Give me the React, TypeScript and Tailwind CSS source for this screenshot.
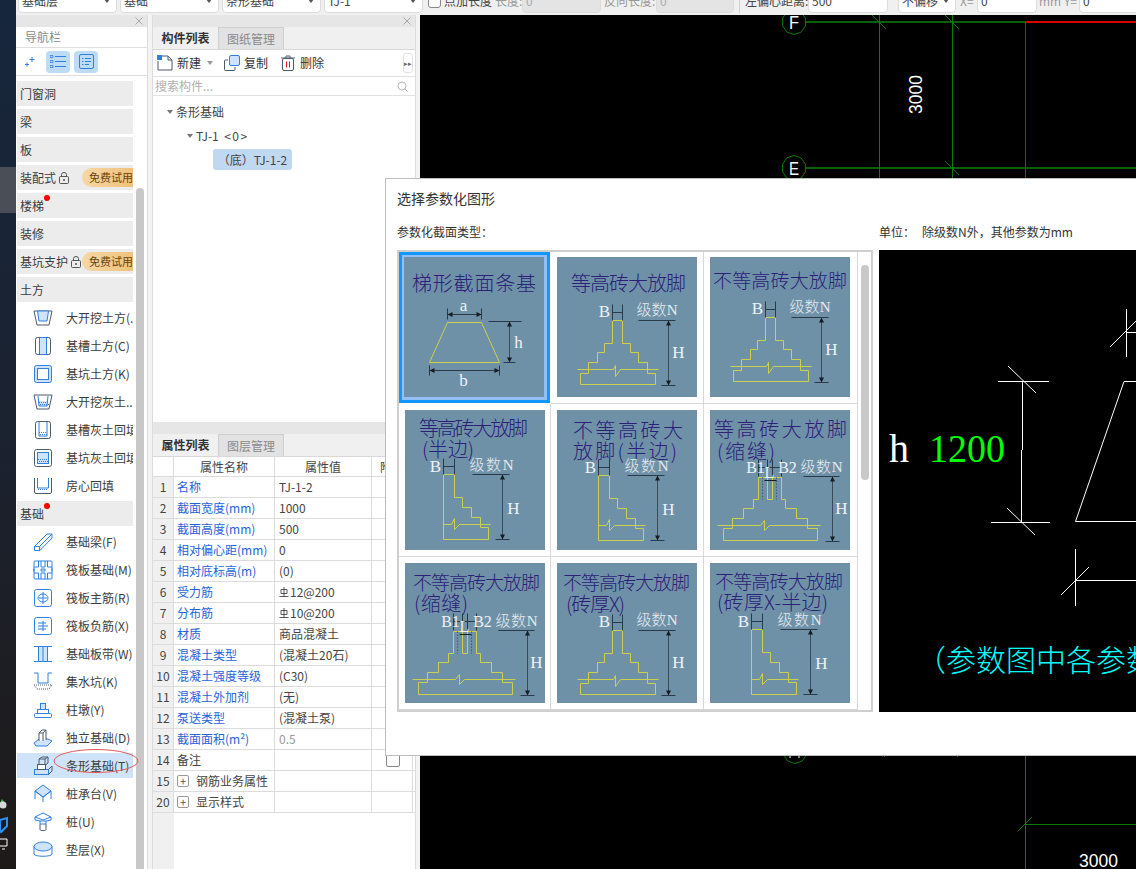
import React from "react";

const Y = "#cdd04c";
const D = "#2b3a48";
const W = "#eef3f6";
const SERIF = "'Liberation Serif','Noto Sans CJK SC',serif";
const SANS = "'Noto Sans CJK SC','Liberation Sans',sans-serif";

function VDim({ x, y1, y2 }: { x: number; y1: number; y2: number }) {
  return (
    <g>
      <line x1={x} y1={y1} x2={x} y2={y2} stroke="#3c4a58" strokeWidth="1" />
      <polygon points={`${x},${y1} ${x - 2.5},${y1 + 5} ${x + 2.5},${y1 + 5}`} fill="#161c22" />
      <polygon points={`${x},${y2} ${x - 2.5},${y2 - 5} ${x + 2.5},${y2 - 5}`} fill="#161c22" />
    </g>
  );
}

function Lab({ x, y, t, size = 17, len }: { x: number; y: number; t: string; size?: number; len?: number }) {
  return (
    <text x={x} y={y} fontFamily={SERIF} fontSize={size} fill={W} textAnchor={len ? "start" : "middle"} dominantBaseline="central" textLength={len} lengthAdjust={len ? "spacingAndGlyphs" : undefined}>
      {t}
    </text>
  );
}

function Nlab({ x, y, len }: { x: number; y: number; len: number }) {
  return (
    <text x={x} y={y} fontFamily={SERIF} fontWeight="300" fontSize="15" fill="#e4ebef" dominantBaseline="central" textLength={len} lengthAdjust="spacing">
      级数N
    </text>
  );
}

function Title({ lines }: { lines: [string, number, number, number][] }) {
  return (
    <g>
      {lines.map(([t, x1, x2, y]) => (
        <text key={t} x={x1} y={y} fontFamily={SANS} fontWeight="300" fontSize={t.length >= 7 && x2 - x1 > 125 ? 19 : 20} fill="#2c2078" dominantBaseline="central" textLength={x2 - x1} lengthAdjust="spacing">
          {t}
        </text>
      ))}
    </g>
  );
}

function Trapezoid() {
  return (
    <g>
      <polygon points="43,65 77,65 95,105 25,105" fill="none" stroke={Y} strokeWidth="1" />
      <path d="M43 51V62M77 51V62M43 57H77" stroke={D} fill="none" />
      <polygon points="43,57 48,54.5 48,59.5" fill="#161c22" />
      <polygon points="77,57 72,54.5 72,59.5" fill="#161c22" />
      <Lab x={59} y={48} t="a" />
      <path d="M84 64H117M99 105H111" stroke={D} fill="none" />
      <VDim x={105} y1={64} y2={105} />
      <Lab x={114} y={85} t="h" />
      <path d="M25 108V118M95 108V118M25 113H95" stroke={D} fill="none" />
      <polygon points="25,113 30,110.5 30,115.5" fill="#161c22" />
      <polygon points="95,113 90,110.5 90,115.5" fill="#161c22" />
      <Lab x={59} y={123} t="b" />
    </g>
  );
}

function Full({ dy = 0 }: { dy?: number }) {
  return (
    <g transform={`translate(0 ${dy})`}>
      <polygon points="55,63 65,63 65,86 73,86 73,95 81,95 81,105 90,105 90,116 98,116 98,127 23,127 23,116 31,116 31,105 40,105 40,95 47,95 47,86 55,86" fill="none" stroke={Y} strokeWidth="1" />
      <path d="M20 112H56L58 108L58 119L63 112H101" fill="none" stroke={Y} strokeWidth="1" />
      <path d="M55 47V63M65 47V63M55 55H65" stroke={D} fill="none" />
      <Lab x={47} y={54} t="B" />
      <Nlab x={79} y={52} len={41} />
      <path d="M81 63H118M104 128H118" stroke={D} fill="none" />
      <VDim x={111} y1={63} y2={128} />
      <Lab x={121} y={95} t="H" />
    </g>
  );
}

function Half({ dx = 0, dy = 0 }: { dx?: number; dy?: number }) {
  return (
    <g transform={`translate(${dx} ${dy})`}>
      <polygon points="38,64 49,64 49,87 57,87 57,97 66,97 66,107 75,107 75,117 83,117 83,129 38,129" fill="none" stroke={Y} strokeWidth="1" />
      <path d="M38 114H46L49 108L49 119L54 114H85" fill="none" stroke={Y} strokeWidth="1" />
      <path d="M38 48V64M49 48V64M38 56H49" stroke={D} fill="none" />
      <Lab x={30} y={56} t="B" />
      <Nlab x={64} y={54} len={44} />
      <path d="M67 64H104M90 129H104" stroke={D} fill="none" />
      <VDim x={97} y1={64} y2={129} />
      <Lab x={108} y={98} t="H" />
    </g>
  );
}

function Gap({ dy = 0 }: { dy?: number }) {
  return (
    <g transform={`translate(0 ${dy})`}>
      <polygon points="48,68 71,68 71,90 75,90 75,99 86,99 86,109 97,109 97,119 107,119 107,131 13,131 13,119 22,119 22,109 33,109 33,99 43,99 43,90 48,90" fill="none" stroke={Y} strokeWidth="1" />
      <path d="M57 68V90H62V68" fill="none" stroke={Y} strokeWidth="1" />
      <path d="M7 116H50L54 111L54 121L59 116H110" fill="none" stroke={Y} strokeWidth="1" />
      <path d="M52 68V90M66 68V90" fill="none" stroke="#4a5a68" strokeDasharray="1.5 1.5" />
      <path d="M48 50V67M57 50V67M62 50V67M71 50V67M48 58H71" stroke={D} fill="none" />
      <Lab x={45} y={58} t="B1" size={16} />
      <Lab x={77} y={58} t="B2" size={16} />
      <Lab x={59} y={63} t="L" size={16} />
      <path d="M54 71H66" stroke="#161c22" />
      <Nlab x={90} y={57} len={42} />
      <path d="M93 67H129M115 132H129" stroke={D} fill="none" />
      <VDim x={122} y1={67} y2={132} />
      <Lab x={131} y={99} t="H" />
    </g>
  );
}

const tiles: { lines: [string, number, number, number][]; art: React.ReactNode }[] = [
  { lines: [["梯形截面条基", 8, 132, 25]], art: <Trapezoid /> },
  { lines: [["等高砖大放脚", 14, 129, 25]], art: <Full /> },
  { lines: [["不等高砖大放脚", 3, 137, 22]], art: <Full dy={-3} /> },
  { lines: [["等高砖大放脚", 14, 123, 17], ["(半边)", 17, 69, 38]], art: <Half /> },
  { lines: [["不等高砖大", 16, 126, 19], ["放脚(半边)", 16, 120, 40]], art: <Half dx={3} dy={1} /> },
  { lines: [["等高砖大放脚", 4, 137, 18], ["(缩缝)", 7, 65, 40]], art: <Gap dy={-1} /> },
  { lines: [["不等高砖大放脚", 8, 135, 18], ["(缩缝)", 9, 63, 39]], art: <Gap /> },
  { lines: [["不等高砖大放脚", 6, 133, 18], ["(砖厚X)", 9, 68, 40]], art: <Full dy={4} /> },
  { lines: [["不等高砖大放脚", 5, 133, 17], ["(砖厚X-半边)", 7, 118, 38]], art: <Half dx={3} dy={2} /> },
];

function Tile({ i }: { i: number }) {
  const t = tiles[i];
  return (
    <svg width="140" height="140" viewBox="0 0 140 140" className="block bg-[#6f91a8]">
      <Title lines={t.lines} />
      <g transform="translate(0.5 0.5)">{t.art}</g>
    </svg>
  );
}

const B = "#2f80e4";
const G = "#4d5b6e";
const L = "#cfe3fa";

function Dots({ x, y, w, h }: { x: number; y: number; w: number; h: number }) {
  const out = [];
  for (let r = 0; r < h; r += 2) for (let c = 0; c < w; c += 2) out.push(<rect key={`${r}-${c}`} x={x + c + (r % 4 ? 1 : 0)} y={y + r} width="1" height="1" fill={B} />);
  return <g>{out}</g>;
}

const icons: Record<string, React.ReactNode> = {
  a: (<><path d="M1 3H19L16 17H4Z" fill="none" stroke={G} /><path d="M4.5 3H15.5L14 13H6Z" fill={L} stroke={B} /></>),
  b: (<><rect x="2.5" y="1.5" width="15" height="17" rx="2" fill="none" stroke={G} /><rect x="6.5" y="1.5" width="7" height="17" fill={L} stroke={B} /></>),
  c: (<><rect x="1.5" y="1.5" width="17" height="17" rx="2" fill={L} stroke={B} /><rect x="4.5" y="4.5" width="11" height="11" fill="#fff" stroke={B} /></>),
  d: (<><path d="M1 3H19L16 17H4Z" fill="none" stroke={G} /><path d="M5 9H15L14 14H6Z" fill={L} /><Dots x={6} y={10} w={9} h={4} /><path d="M5 4L6 14H14L15 4" fill="none" stroke={B} /></>),
  e: (<><rect x="2.5" y="1.5" width="15" height="17" rx="2" fill="none" stroke={G} /><path d="M6 2V16H14V2" fill="none" stroke={B} /><Dots x={6} y={12} w={8} h={4} /></>),
  f: (<><rect x="1.5" y="1.5" width="17" height="17" rx="2" fill="none" stroke={G} /><rect x="4.5" y="4.5" width="11" height="11" fill={L} stroke={B} /><Dots x={5} y={11} w={10} h={4} /></>),
  g: (<><path d="M1.5 2V16a1.5 1.5 0 0 0 1.5 1.5H17a1.5 1.5 0 0 0 1.5-1.5V2" fill="none" stroke={G} /><path d="M4.5 2V12H15.5V2" fill="none" stroke={B} /><Dots x={5} y={13} w={10} h={1} /></>),
  h: (<><path d="M1.500 14.500L14 2H19V6L7 18.500H1.500Z" fill="none" stroke={B} /><path d="M1.500 14.500H6.500V18.500M6.500 14.500L19 2" fill="none" stroke={B} /></>),
  i: (<><rect x="1" y="1" width="18" height="18" rx="1" fill="none" stroke={B} /><path d="M1 7H5.5V1M14.5 1V7H19M1 13H5.5V19M14.5 19V13H19M8 1V7H12V1M8 19V13H12V19M1 8.5V11.5M19 8.5V11.5M8 9H12V11H8Z" fill="none" stroke={B} /></>),
  j: (<><rect x="1.5" y="1.5" width="17" height="17" rx="2" fill="none" stroke={B} /><path d="M5 10a5 4 0 1 0 10 0a5 4 0 1 0-10 0M10 4V16M6 10H14" fill="none" stroke={B} /></>),
  k: (<><rect x="1.5" y="1.5" width="17" height="17" rx="2" fill="none" stroke={B} /><path d="M5 7H13M5 10H15M5 13H13M10 5V15" fill="none" stroke={B} /></>),
  l: (<><rect x="5" y="3" width="10" height="14" fill={L} /><path d="M1 2.5H19M1 17.5H19M5.5 3V17M14.5 3V17M10 3V17" fill="none" stroke={B} /></>),
  m: (<><path d="M5 1V11H15V1M1 1H5M15 1H19" fill="none" stroke={B} /><path d="M1 13H19L16 17H4Z" fill="none" stroke={G} strokeDasharray="1 1" /></>),
  n: (<><rect x="1.5" y="13.5" width="17" height="4" rx="1" fill="none" stroke={B} /><rect x="4.5" y="9.5" width="11" height="4" fill="none" stroke={B} /><rect x="7.5" y="3.5" width="5" height="6" fill={L} stroke={B} /></>),
  o: (<><path d="M1 15L6 11H15L19 13L14 18H3Z" fill={L} stroke={B} /><path d="M6 13V5L9 2H13V12" fill="#fff" stroke={G} /><path d="M6 5H10V13M10 5L13 2" fill="none" stroke={G} /></>),
  p: (<><rect x="1.5" y="13.5" width="14" height="5" fill={L} stroke={B} /><path d="M15.5 18.5L19 15V10L15.5 13.5" fill="none" stroke={G} /><rect x="4.5" y="8.5" width="8" height="5" fill="#fff" stroke={G} /><path d="M6 8.5V3L9 1H15V7L12.5 9M6 3H12V8.5M12 3L15 1" fill="none" stroke={G} /></>),
  q: (<><path d="M10 1L18 7L10 13L2 7Z" fill={L} stroke={B} /><path d="M2 7V15M18 7V15M10 13V18M2 7L10 13L18 7" fill="none" stroke={B} /></>),
  r: (<><path d="M2 5L10 1L18 5V8L13 9V12H7V9L2 8Z" fill="none" stroke={B} /><path d="M2 5L10 8L18 5M7 9H13" fill="none" stroke={B} /><path d="M7 12V17.5C7 19 13 19 13 17.5V12" fill="none" stroke={G} /></>),
  s: (<><path d="M1 6V14C1 17 19 17 19 14V6" fill="none" stroke={B} /><ellipse cx="10" cy="6.5" rx="9" ry="4.5" fill={L} stroke={B} /></>),
};

function NavIcon({ k }: { k: string }) {
  return (
    <svg width="20" height="20" viewBox="0 0 20 20" className="shrink-0">
      {icons[k]}
    </svg>
  );
}

function Lock() {
  return (
    <svg width="10" height="12" viewBox="0 0 10 12" className="ml-[3px] shrink-0">
      <rect x="0.5" y="4.5" width="9" height="7" rx="1" fill="none" stroke="#555" />
      <path d="M2.5 4.5V2.5a2.5 2 0 0 1 5 0V4.5" fill="none" stroke="#555" />
      <circle cx="5" cy="8" r="1" fill="#555" />
    </svg>
  );
}

function Pill() {
  return (
    <span className="ml-auto flex h-[19px] w-[51px] shrink-0 items-center overflow-hidden whitespace-nowrap rounded-l-[10px] bg-gradient-to-r from-[#f6d7a4] to-[#efc27c] pl-[7px] text-[11px] text-[#6b4310]">
      免费试用
    </span>
  );
}

type NavRow = { t: string; icon?: string; lock?: boolean; dot?: boolean; active?: boolean };
const nav: NavRow[] = [
  { t: "门窗洞" }, { t: "梁" }, { t: "板" }, { t: "装配式", lock: true }, { t: "楼梯", dot: true }, { t: "装修" }, { t: "基坑支护", lock: true }, { t: "土方" },
  { t: "大开挖土方(.", icon: "a" }, { t: "基槽土方(C)", icon: "b" }, { t: "基坑土方(K)", icon: "c" }, { t: "大开挖灰土...", icon: "d" }, { t: "基槽灰土回填", icon: "e" }, { t: "基坑灰土回填", icon: "f" }, { t: "房心回填", icon: "g" },
  { t: "基础", dot: true },
  { t: "基础梁(F)", icon: "h" }, { t: "筏板基础(M)", icon: "i" }, { t: "筏板主筋(R)", icon: "j" }, { t: "筏板负筋(X)", icon: "k" }, { t: "基础板带(W)", icon: "l" }, { t: "集水坑(K)", icon: "m" }, { t: "柱墩(Y)", icon: "n" }, { t: "独立基础(D)", icon: "o" }, { t: "条形基础(T)", icon: "p", active: true }, { t: "桩承台(V)", icon: "q" }, { t: "桩(U)", icon: "r" }, { t: "垫层(X)", icon: "s" },
];

function CloseX() {
  return (
    <svg width="8" height="8" viewBox="0 0 8 8" className="block">
      <path d="M0.5 0.5L7.5 7.5M7.5 0.5L0.5 7.5" stroke="#a8a8a8" fill="none" />
    </svg>
  );
}

function PanelHead() {
  return (
    <div className="flex h-[12px] shrink-0 items-center justify-end bg-[#e6e6e6] pr-[4px]">
      <CloseX />
    </div>
  );
}

function Tabs({ a, b }: { a: string; b: string }) {
  return (
    <div className="flex h-[23px] shrink-0 border-b border-[#d8d8d8] bg-[#f0f0f0] text-[12px]">
      <span className="flex w-[65px] items-center justify-center font-bold text-[#333]">{a}</span>
      <span className="flex w-[66px] items-center justify-center border-x border-t border-[#cfcfcf] bg-[#e2e2e2] text-[#8a8a8a]">{b}</span>
    </div>
  );
}

function Nav() {
  return (
    <div className="flex w-[132px] shrink-0 flex-col border-r border-[#dcdcdc] bg-white">
      <PanelHead />
      <div className="flex h-[21px] shrink-0 items-center border-b border-[#dedede] pl-[9px] text-[12px] text-[#8a8a8a]">导航栏</div>
      <div className="flex h-[28px] shrink-0 items-center border-b border-[#dedede] pl-[8px]">
        <svg width="12" height="12" viewBox="0 0 12 12" className="mr-[10px]">
          <path d="M8 1V6M5.5 3.5H10.5M3 6.5V10.5M1 8.5H5" stroke={B} fill="none" />
        </svg>
        <span className="mr-[4px] flex h-[22px] w-[24px] items-center justify-center rounded-[4px] bg-[#bfdcf7]">
          <svg width="16" height="13" viewBox="0 0 16 13">
            <path d="M0 0.5H3V2.5H0ZM0 5.5H3V7.5H0ZM0 10.5H3V12.5H0Z" fill="none" stroke={B} strokeWidth="0.8" />
            <path d="M5 1.5H16M5 6.5H16M5 11.5H16" stroke={B} />
          </svg>
        </span>
        <span className="flex h-[22px] w-[24px] items-center justify-center rounded-[4px] bg-[#bfdcf7]">
          <svg width="15" height="15" viewBox="0 0 15 15">
            <rect x="0.5" y="0.5" width="14" height="14" rx="1.5" fill="none" stroke={B} />
            <path d="M3 4.5H4.5M6 4.5H12M3 7.5H4.5M6 7.5H12M3 10.5H4.5M6 10.5H10" stroke={B} />
          </svg>
        </span>
      </div>
      <div className="flex min-h-0 flex-1 overflow-hidden">
        <div className="ml-[1px] w-[116px] shrink-0 pt-[2px] text-[12px] text-[#3c3c3c]">
          {nav.map((r) => (
            <div
              key={r.t}
              className={
                r.icon
                  ? r.active
                    ? "mt-[3px] flex h-[25px] items-center overflow-hidden whitespace-nowrap bg-[#cfe4fb] pl-[16px]"
                    : "mt-[3px] flex h-[25px] items-center overflow-hidden whitespace-nowrap pl-[16px]"
                  : "relative mt-[3px] flex h-[25px] items-center overflow-visible whitespace-nowrap bg-[#ececec] pl-[3px]"
              }
            >
              {r.icon && <NavIcon k={r.icon} />}
              <span className={r.icon ? "ml-[13px]" : ""}>{r.t}</span>
              {r.lock && <Lock />}
              {r.lock && <Pill />}
              {r.dot && <span className="absolute left-[27px] top-[2px] h-[6px] w-[6px] rounded-full bg-[#ff0000]" />}
            </div>
          ))}
        </div>
        <div className="ml-[3px] mt-[112px] w-[8px] rounded-t-[4px] bg-[#c8c8c8]" />
      </div>
    </div>
  );
}

function Rebar() {
  return (
    <svg width="10" height="11" viewBox="0 0 10 11" className="mr-[1px] -mt-[3px] inline-block align-middle">
      <path d="M2 2.5H8V6.5H2ZM5 0V9.5M0.5 9.5H9.5" fill="none" stroke="#444" strokeWidth="0.9" />
    </svg>
  );
}

const props: [string, string, string, React.ReactNode, string?][] = [
  ["1", "名称", "b", "TJ-1-2"],
  ["2", "截面宽度(mm)", "b", "1000"],
  ["3", "截面高度(mm)", "b", "500"],
  ["4", "相对偏心距(mm)", "b", "0"],
  ["5", "相对底标高(m)", "b", "(0)"],
  ["6", "受力筋", "b", <><Rebar />12@200</>],
  ["7", "分布筋", "b", <><Rebar />10@200</>],
  ["8", "材质", "b", "商品混凝土"],
  ["9", "混凝土类型", "b", "(混凝土20石)"],
  ["10", "混凝土强度等级", "b", "(C30)"],
  ["11", "混凝土外加剂", "b", "(无)"],
  ["12", "泵送类型", "b", "(混凝土泵)"],
  ["13", "截面面积(m²)", "b", "0.5", "g"],
  ["14", "备注", "k", ""],
];

function Plus() {
  return (
    <span className="mr-[7px] flex h-[12px] w-[12px] items-center justify-center rounded-[2px] border border-[#999] text-[11px] leading-none text-[#555]">+</span>
  );
}

function PropRow({ n, children, v, extra }: { n: string; children: React.ReactNode; v?: React.ReactNode; extra?: React.ReactNode }) {
  return (
    <div className="grid h-[21px] grid-cols-[21px_101px_97px_41px] border-b border-[#dcdcdc]">
      <span className="flex items-center justify-center border-r border-[#dcdcdc] bg-[#f0f0f0] text-[#444]">{n}</span>
      <span className="flex items-center overflow-hidden whitespace-nowrap border-r border-[#dcdcdc] pl-[3px]">{children}</span>
      <span className="flex items-center whitespace-nowrap border-r border-[#dcdcdc] pl-[4px]">{v}</span>
      <span className="flex items-center justify-end border-r border-[#dcdcdc] pr-[13px]">{extra}</span>
    </div>
  );
}

function Middle() {
  return (
    <div className="flex w-[264px] shrink-0 flex-col border-x border-[#dcdcdc] bg-white text-[12px] text-[#444]">
      <div className="flex h-[407px] shrink-0 flex-col">
        <PanelHead />
        <Tabs a="构件列表" b="图纸管理" />
        <div className="flex h-[27px] shrink-0 items-center border-b border-[#e2e2e2] pl-[4px] pr-[2px] text-[#333]">
          <svg width="16" height="16" viewBox="0 0 16 16" className="mr-[4px]">
            <path d="M5 1H11L15 5V15H1V6" fill="none" stroke="#4d5b6e" />
            <path d="M11 1V5H15" fill="none" stroke="#4d5b6e" />
            <rect x="0" y="0" width="5" height="5" fill={B} />
          </svg>
          <span>新建</span>
          <span className="ml-[6px] mr-[11px] h-0 w-0 border-x-[3px] border-t-[4px] border-x-transparent border-t-[#999]" />
          <svg width="16" height="16" viewBox="0 0 16 16" className="mr-[4px]">
            <rect x="5.5" y="0.5" width="10" height="10" rx="1.5" fill={L} stroke={B} />
            <path d="M4 5H1.5A1 1 0 0 0 .5 6V14.5A1 1 0 0 0 1.500 15.500H10A1 1 0 0 0 11 14.500V12" fill="none" stroke="#4d5b6e" />
          </svg>
          <span>复制</span>
          <svg width="14" height="16" viewBox="0 0 14 16" className="ml-[13px] mr-[5px]">
            <path d="M0 3H14M5 3V1H9V3" stroke="#4d5b6e" fill="none" />
            <rect x="1.500" y="3.500" width="11" height="12" rx="1.500" fill="none" stroke="#4d5b6e" />
            <path d="M5.500 6.500V12.500M8.500 6.500V12.500" stroke="#e02020" />
          </svg>
          <span>删除</span>
          <span className="ml-auto flex h-[20px] w-[10px] items-center justify-center rounded-[3px] border border-[#e2e2e2] text-[7px] text-[#666]">▸▸</span>
        </div>
        <div className="flex h-[19px] shrink-0 items-center justify-between border-b border-[#e2e2e2] pl-[2px] pr-[7px] text-[#b0b0b0]">
          <span>搜索构件...</span>
          <svg width="11" height="11" viewBox="0 0 11 11">
            <circle cx="5" cy="5" r="4" fill="none" stroke="#b8b8b8" />
            <path d="M8 8L10.500 10.500" stroke="#b8b8b8" />
          </svg>
        </div>
        <div className="pt-[4px] text-[#444]">
          <div className="flex h-[24px] items-center pl-[14px]">
            <span className="mr-[3px] h-0 w-0 border-x-[3px] border-t-[4px] border-x-transparent border-t-[#777]" />
            条形基础
          </div>
          <div className="flex h-[24px] items-center pl-[34px]">
            <span className="mr-[3px] h-0 w-0 border-x-[3px] border-t-[4px] border-x-transparent border-t-[#777]" />
            <span className="whitespace-pre">TJ-1  </span>
            <span className="tracking-[1.5px]">&lt;0&gt;</span>
          </div>
          <div className="ml-[60px] mt-[1px] flex h-[21px] w-[79px] items-center justify-center rounded-[3px] bg-[#c0d8f0]">（底）TJ-1-2</div>
        </div>
      </div>
      <PanelHead />
      <Tabs a="属性列表" b="图层管理" />
      <div className="grid h-[20px] grid-cols-[21px_101px_97px_41px] border-b border-[#dcdcdc] text-[#444]">
        <span className="border-r border-[#dcdcdc]" />
        <span className="flex items-center justify-center border-r border-[#dcdcdc]">属性名称</span>
        <span className="flex items-center justify-center border-r border-[#dcdcdc]">属性值</span>
        <span className="flex items-center pl-[8px]">附加</span>
      </div>
      {props.map(([n, name, c, v, g]) => (
        <PropRow key={n} n={n} v={<span className={g ? "text-[#999]" : "text-[#444]"}>{v}</span>} extra={n === "14" ? <span className="mr-[-1px] h-[14px] w-[14px] rounded-[2px] border border-[#888] bg-white" /> : null}>
          <span className={c === "b" ? "text-[#2563dc]" : "text-[#444]"}>{name}</span>
        </PropRow>
      ))}
      <PropRow n="15"><Plus /><span>钢筋业务属性</span></PropRow>
      <PropRow n="20"><Plus /><span>显示样式</span></PropRow>
      <div className="w-[21px] flex-1 bg-[#f0f0f0]" />
    </div>
  );
}

function Sel({ t, w }: { t: string; w: string }) {
  return (
    <span className={`${w} flex h-[24px] shrink-0 items-center justify-between rounded-[4px] border border-[#dcdcdc] bg-white pl-[3px] pr-[6px]`}>
      <span className="whitespace-nowrap">{t}</span>
      <span className="h-0 w-0 border-x-[3px] border-t-[4px] border-x-transparent border-t-[#555]" />
    </span>
  );
}

function Inp({ t, w, off }: { t: string; w: string; off?: boolean }) {
  return (
    <span className={`${w} ${off ? "bg-[#e4e4e4] text-[#aaa]" : "bg-white"} flex h-[24px] shrink-0 items-center rounded-[4px] border border-[#dcdcdc] pl-[3px]`}>{t}</span>
  );
}

function Toolbar() {
  return (
    <div className="flex h-[15px] shrink-0 items-end overflow-hidden bg-[#f0f0f0] pb-[2px] pl-[2px] text-[12px] text-[#444]">
      <div className="flex items-center gap-[3px]">
        <Sel t="基础层" w="w-[99px]" />
        <Sel t="基础" w="w-[99px]" />
        <Sel t="条形基础" w="w-[99px]" />
        <Sel t="TJ-1" w="w-[99px]" />
      </div>
      <div className="ml-[5px] flex items-center whitespace-nowrap">
        <span className="h-[13px] w-[13px] shrink-0 rounded-[3px] border border-[#888] bg-white" />
        <span className="ml-[3px] w-[48px]">点加长度</span>
        <span className="ml-[3px] w-[27px] text-[#999]">长度:</span>
        <Inp t="0" w="w-[79px]" off />
        <span className="ml-[3px] w-[52px] text-[#999]">反向长度:</span>
        <Inp t="0" w="w-[78px]" off />
        <span className="mx-[5px] h-[24px] w-px bg-[#d0d0d0]" />
        <span className="w-[63px]">左偏心距离:</span>
        <Inp t="500" w="w-[80px]" />
        <span className="w-[10px]" />
        <Sel t="不偏移" w="w-[58px]" />
        <span className="ml-[4px] w-[17px] text-[#999]">X=</span>
        <Inp t="0" w="w-[60px]" />
        <span className="ml-[2px] w-[40px] text-[#999]">mm Y=</span>
        <Inp t="0" w="w-[60px]" />
      </div>
    </div>
  );
}

function Hex({ cx, cy, t }: { cx: number; cy: number; t?: string }) {
  const pts = Array.from({ length: 10 }, (_, i) => {
    const a = (Math.PI * 2 * i) / 10 + Math.PI / 2;
    return `${(cx + 12 * Math.cos(a)).toFixed(1)},${(cy + 12.5 * Math.sin(a)).toFixed(1)}`;
  }).join(" ");
  return (
    <g>
      <polygon points={pts} fill="#000" stroke="#0a7a0a" strokeWidth="1" />
      {t && (
        <text x={cx - 5} y={cy + 7} fontFamily="'Liberation Sans',sans-serif" fontSize="19" fill="#fff" textLength="10" lengthAdjust="spacingAndGlyphs">
          {t}
        </text>
      )}
    </g>
  );
}

function Canvas() {
  return (
    <div className="min-w-0 flex-1 bg-black">
      <svg width="716" height="854" viewBox="420 15 716 854" className="block">
        <path d="M805 22H1025M805 168H1136" stroke="#0a600a" strokeWidth="2" fill="none" />
        <path d="M879.500 15V178M952.500 15V178M872 15L886 29M945 15L959 29M945 161L959 175" stroke="#0a7a0a" fill="none" />
        <path d="M1025.500 178V22" stroke="#e00000" strokeWidth="1" fill="none" />
        <path d="M1025 22H1136" stroke="#d80000" strokeWidth="2" fill="none" />
        <Hex cx={794} cy={22} t="F" />
        <Hex cx={794} cy={168} t="E" />
        <text x="922" y="114" transform="rotate(-90 922 114)" fontFamily="'Liberation Sans',sans-serif" fontSize="17.500" fill="#fff">3000</text>
        <Hex cx={795} cy={751} />
        <path d="M790 756V758M799 756V758" stroke="#fff" fill="none" />
        <path d="M885 757L883 755M958 757L956 755" stroke="#0a7a0a" fill="none" />
        <path d="M1025.500 755V869M1025 824.500H1136M1018 831L1032 817" stroke="#0a7a0a" strokeWidth="1" fill="none" />
        <text x="1079" y="867" fontFamily="'Liberation Sans',sans-serif" fontSize="17.500" fill="#fff">3000</text>
      </svg>
    </div>
  );
}

function Preview() {
  return (
    <div className="h-[462px] w-[500px] shrink-0 bg-black">
      <svg width="500" height="462" viewBox="879 250 500 462" className="block">
        <g stroke="#fff" strokeWidth="1" fill="none">
          <path d="M998 381.500H1049M1008 366L1036 393M1022.500 381V450M1021.500 450V522M991 522.500H1050M1007 508L1035 535" />
          <path d="M1140 381.500H1124L1075.500 521.500H1140" />
          <path d="M1126.500 309V357M1126 332.500H1140M1110 347L1140 317" />
          <path d="M1075.500 549V606M1075 580.500H1140M1061 595L1089 567" />
        </g>
        <text x="889" y="462" fontFamily="'Liberation Serif',serif" fontSize="40" fill="#fff">h</text>
        <text x="929" y="462" fontFamily="'Liberation Serif',serif" fontSize="40" fill="#00ff00" textLength="76" lengthAdjust="spacingAndGlyphs">1200</text>
        <text x="916" y="671" fontFamily={SANS} fontWeight="300" fontSize="30" fill="#00ffff">（参数图中各参数</text>
      </svg>
    </div>
  );
}

function Dialog() {
  return (
    <div className="absolute left-[385px] top-[178px] h-[578px] w-[800px] border border-[#bdbdbd] bg-white pl-[11px] pt-[9px] text-[#333]">
      <div className="h-[20px] text-[14px] leading-[20px]">选择参数化图形</div>
      <div className="mt-[16px] flex h-[16px] text-[12px] leading-[16px]">
        <span className="w-[482px]">参数化截面类型：</span>
        <span className="w-[43px]">单位：</span>
        <span>除级数N外，其他参数为mm</span>
      </div>
      <div className="mt-[10px] flex gap-[6px]">
        <div className="flex h-[462px] w-[476px] shrink-0 border-2 border-[#cfcfcf]">
          <div className="grid h-[458px] w-[459px] shrink-0 grid-cols-[152px_153px_154px] grid-rows-[152px_153px_153px]">
            {tiles.map((_, i) =>
              i === 0 ? (
                <div key={i} className="h-[151px] w-[151px] border-[3px] border-[#1296ff]">
                  <div className="h-full border-2 border-[#93bff7] bg-[#93bff7]">
                    <Tile i={i} />
                  </div>
                </div>
              ) : (
                <div key={i} className={i < 3 ? "border-b border-r border-[#d8d8d8] pl-[6px] pt-[5px]" : "border-b border-r border-[#d8d8d8] pl-[6px] pt-[6px]"}>
                  <Tile i={i} />
                </div>
              )
            )}
          </div>
          <div className="ml-[3px] mt-[13px] h-[215px] w-[8px] rounded-[4px] bg-[#c9c9c9]" />
        </div>
        <Preview />
      </div>
    </div>
  );
}

function Wallpaper() {
  return (
    <div className="relative w-[16px] shrink-0 overflow-hidden bg-gradient-to-b from-[#16263c] via-[#1b2230] to-[#1e1a18]">
      <div className="absolute left-0 top-[167px] h-[46px] w-full bg-[#4a4e56]" />
      <svg width="16" height="70" viewBox="0 0 16 70" className="absolute left-0 top-[795px]">
        <path d="M0 8L2 4L5 8Z" fill="#39c24a" />
        <circle cx="3" cy="10" r="3.500" fill="#d8d8d8" />
        <path d="M0 25L7 23V31L1 37L0 36Z" fill="none" stroke="#2f90ee" strokeWidth="2" />
        <path d="M0 44H7V51H0M2 54H5" fill="none" stroke="#fff" />
      </svg>
    </div>
  );
}

export default function App() {
  return (
    <div className="relative flex h-[869px] w-[1136px] overflow-hidden bg-[#f4f4f4] [font-family:'Noto_Sans_CJK_SC','Noto_Sans',sans-serif]">
      <Wallpaper />
      <div className="flex min-w-0 flex-1 flex-col">
        <Toolbar />
        <div className="flex min-h-0 flex-1">
          <Nav />
          <div className="w-[4px] shrink-0" />
          <Middle />
          <div className="w-[4px] shrink-0" />
          <Canvas />
        </div>
      </div>
      <Dialog />
      <svg width="90" height="28" viewBox="0 0 90 28" className="pointer-events-none absolute left-[51px] top-[747px]">
        <ellipse cx="45" cy="14" rx="42" ry="11.500" fill="none" stroke="#e25a5a" strokeWidth="1" />
      </svg>
    </div>
  );
}
